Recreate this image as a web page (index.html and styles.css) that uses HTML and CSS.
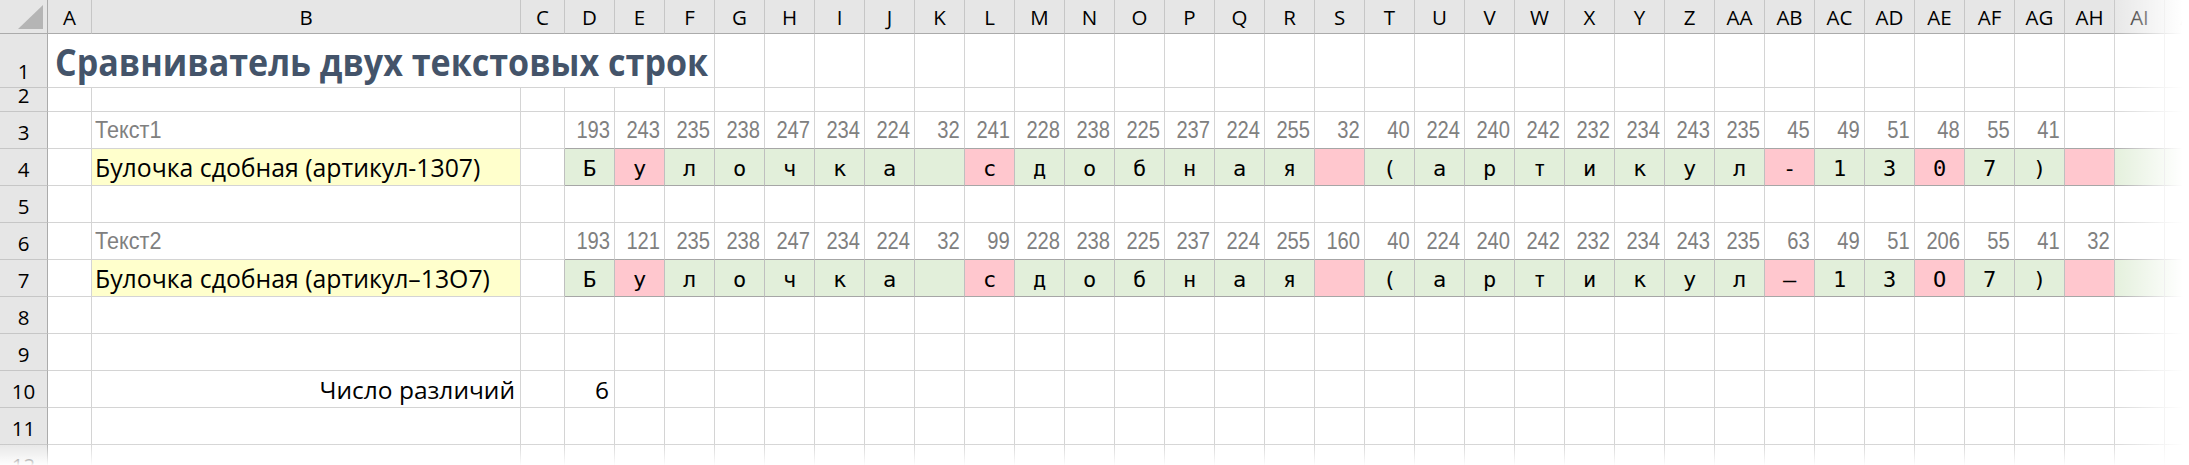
FILE: index.html
```html
<!DOCTYPE html>
<html lang="ru">
<head>
<meta charset="utf-8">
<title>Сравниватель двух текстовых строк</title>
<link rel="stylesheet" href="styles.css">
</head>
<body>
<div class="sheet">
<div class="corner"><svg width="25" height="24" viewBox="0 0 25 24"><polygon points="0,24 25,24 25,0" fill="#b5b5b5"/></svg></div>
<div class="hc">A</div><div class="hc">B</div><div class="hc">C</div><div class="hc">D</div><div class="hc">E</div><div class="hc">F</div>
<div class="hc">G</div><div class="hc">H</div><div class="hc">I</div><div class="hc">J</div><div class="hc">K</div><div class="hc">L</div>
<div class="hc">M</div><div class="hc">N</div><div class="hc">O</div><div class="hc">P</div><div class="hc">Q</div><div class="hc">R</div>
<div class="hc">S</div><div class="hc">T</div><div class="hc">U</div><div class="hc">V</div><div class="hc">W</div><div class="hc">X</div>
<div class="hc">Y</div><div class="hc">Z</div><div class="hc">AA</div><div class="hc">AB</div><div class="hc">AC</div><div class="hc">AD</div>
<div class="hc">AE</div><div class="hc">AF</div><div class="hc">AG</div><div class="hc">AH</div><div class="hc">AI</div><div class="hc">AJ</div>

<div class="hr">1</div><div class="title"><span>Сравниватель двух текстовых строк</span></div>
<i></i><i></i><i></i><i></i><i></i><i></i><i></i><i></i><i></i><i></i>
<i></i><i></i><i></i><i></i><i></i><i></i><i></i><i></i><i></i><i></i>
<i></i><i></i><i></i><i></i><i></i><i></i><i></i><i></i><i></i><i></i>

<div class="hr">2</div>
<i></i><i></i><i></i><i></i><i></i><i></i><i></i><i></i><i></i><i></i><i></i><i></i>
<i></i><i></i><i></i><i></i><i></i><i></i><i></i><i></i><i></i><i></i><i></i><i></i>
<i></i><i></i><i></i><i></i><i></i><i></i><i></i><i></i><i></i><i></i><i></i><i></i>

<div class="hr">3</div><i></i><div class="lbl"><span>Текст1</span></div><i></i>
<div class="n"><span>193</span></div><div class="n"><span>243</span></div><div class="n"><span>235</span></div><div class="n"><span>238</span></div><div class="n"><span>247</span></div><div class="n"><span>234</span></div>
<div class="n"><span>224</span></div><div class="n"><span>32</span></div><div class="n"><span>241</span></div><div class="n"><span>228</span></div><div class="n"><span>238</span></div><div class="n"><span>225</span></div>
<div class="n"><span>237</span></div><div class="n"><span>224</span></div><div class="n"><span>255</span></div><div class="n"><span>32</span></div><div class="n"><span>40</span></div><div class="n"><span>224</span></div>
<div class="n"><span>240</span></div><div class="n"><span>242</span></div><div class="n"><span>232</span></div><div class="n"><span>234</span></div><div class="n"><span>243</span></div><div class="n"><span>235</span></div>
<div class="n"><span>45</span></div><div class="n"><span>49</span></div><div class="n"><span>51</span></div><div class="n"><span>48</span></div><div class="n"><span>55</span></div><div class="n"><span>41</span></div>
<i class="nb"></i><i class="nb"></i><i class="nb"></i>

<div class="hr">4</div><i></i><div class="y">Булочка сдобная (артикул-1307)</div><i class="cb"></i>
<div class="g">Б</div><div class="r">у</div><div class="g">л</div><div class="g">о</div><div class="g">ч</div><div class="g">к</div>
<div class="g">а</div><div class="g"></div><div class="r">с</div><div class="g">д</div><div class="g">о</div><div class="g">б</div>
<div class="g">н</div><div class="g">а</div><div class="g">я</div><div class="r"></div><div class="g">(</div><div class="g">а</div>
<div class="g">р</div><div class="g">т</div><div class="g">и</div><div class="g">к</div><div class="g">у</div><div class="g">л</div>
<div class="r">-</div><div class="g">1</div><div class="g">3</div><div class="r">0</div><div class="g">7</div><div class="g">)</div>
<div class="r"></div><div class="g"></div><div class="g"></div>

<div class="hr">5</div>
<i></i><i></i><i></i><i></i><i></i><i></i><i></i><i></i><i></i><i></i><i></i><i></i>
<i></i><i></i><i></i><i></i><i></i><i></i><i></i><i></i><i></i><i></i><i></i><i></i>
<i></i><i></i><i></i><i></i><i></i><i></i><i></i><i></i><i></i><i></i><i></i><i></i>

<div class="hr">6</div><i></i><div class="lbl"><span>Текст2</span></div><i></i>
<div class="n"><span>193</span></div><div class="n"><span>121</span></div><div class="n"><span>235</span></div><div class="n"><span>238</span></div><div class="n"><span>247</span></div><div class="n"><span>234</span></div>
<div class="n"><span>224</span></div><div class="n"><span>32</span></div><div class="n"><span>99</span></div><div class="n"><span>228</span></div><div class="n"><span>238</span></div><div class="n"><span>225</span></div>
<div class="n"><span>237</span></div><div class="n"><span>224</span></div><div class="n"><span>255</span></div><div class="n"><span>160</span></div><div class="n"><span>40</span></div><div class="n"><span>224</span></div>
<div class="n"><span>240</span></div><div class="n"><span>242</span></div><div class="n"><span>232</span></div><div class="n"><span>234</span></div><div class="n"><span>243</span></div><div class="n"><span>235</span></div>
<div class="n"><span>63</span></div><div class="n"><span>49</span></div><div class="n"><span>51</span></div><div class="n"><span>206</span></div><div class="n"><span>55</span></div><div class="n"><span>41</span></div>
<div class="n"><span>32</span></div><i class="nb"></i><i class="nb"></i>

<div class="hr">7</div><i></i><div class="y">Бyлочка cдобная&nbsp;(артикул–13О7) </div><i class="cb"></i>
<div class="g">Б</div><div class="r">y</div><div class="g">л</div><div class="g">о</div><div class="g">ч</div><div class="g">к</div>
<div class="g">а</div><div class="g"></div><div class="r">c</div><div class="g">д</div><div class="g">о</div><div class="g">б</div>
<div class="g">н</div><div class="g">а</div><div class="g">я</div><div class="r"></div><div class="g">(</div><div class="g">а</div>
<div class="g">р</div><div class="g">т</div><div class="g">и</div><div class="g">к</div><div class="g">у</div><div class="g">л</div>
<div class="r">–</div><div class="g">1</div><div class="g">3</div><div class="r">О</div><div class="g">7</div><div class="g">)</div>
<div class="r"></div><div class="g"></div><div class="g"></div>

<div class="hr">8</div>
<i></i><i></i><i></i><i></i><i></i><i></i><i></i><i></i><i></i><i></i><i></i><i></i>
<i></i><i></i><i></i><i></i><i></i><i></i><i></i><i></i><i></i><i></i><i></i><i></i>
<i></i><i></i><i></i><i></i><i></i><i></i><i></i><i></i><i></i><i></i><i></i><i></i>

<div class="hr">9</div>
<i></i><i></i><i></i><i></i><i></i><i></i><i></i><i></i><i></i><i></i><i></i><i></i>
<i></i><i></i><i></i><i></i><i></i><i></i><i></i><i></i><i></i><i></i><i></i><i></i>
<i></i><i></i><i></i><i></i><i></i><i></i><i></i><i></i><i></i><i></i><i></i><i></i>

<div class="hr">10</div><i></i><div class="rt">Число различий</div><i></i><div class="rt">6</div>
<i></i><i></i><i></i><i></i><i></i><i></i><i></i><i></i>
<i></i><i></i><i></i><i></i><i></i><i></i><i></i><i></i>
<i></i><i></i><i></i><i></i><i></i><i></i><i></i><i></i>
<i></i><i></i><i></i><i></i><i></i><i></i><i></i><i></i>

<div class="hr">11</div>
<i></i><i></i><i></i><i></i><i></i><i></i><i></i><i></i><i></i><i></i><i></i><i></i>
<i></i><i></i><i></i><i></i><i></i><i></i><i></i><i></i><i></i><i></i><i></i><i></i>
<i></i><i></i><i></i><i></i><i></i><i></i><i></i><i></i><i></i><i></i><i></i><i></i>

<div class="hr">12</div>
<i></i><i></i><i></i><i></i><i></i><i></i><i></i><i></i><i></i><i></i><i></i><i></i>
<i></i><i></i><i></i><i></i><i></i><i></i><i></i><i></i><i></i><i></i><i></i><i></i>
<i></i><i></i><i></i><i></i><i></i><i></i><i></i><i></i><i></i><i></i><i></i><i></i>
</div>
<div class="fade-r"></div>
<div class="fade-b"></div>
</body>
</html>
```

FILE: styles.css
```css
* { box-sizing: border-box; }
html, body { margin: 0; padding: 0; background: #fff; }
body {
  width: 2189px;
  height: 465px;
  overflow: hidden;
  position: relative;
  font-family: "Open Sans", "Noto Sans", sans-serif;
  color: #000;
}
.sheet {
  display: grid;
  grid-template-columns: 48px 44px 429px 44px repeat(33, 50px);
  grid-template-rows: 34px 54px 24px repeat(10, 37px);
}
.sheet > * {
  display: flex;
  align-items: flex-end;
  min-width: 0;
  white-space: pre;
  line-height: 1;
  font-style: normal;
  border-right: 1px solid #d4d4d4;
  border-bottom: 1px solid #d4d4d4;
}
.corner {
  background: #e6e6e6;
  border-right-color: #ababab;
  border-bottom-color: #ababab;
  justify-content: flex-end;
  padding: 0 4px 4px 0;
}
.hc {
  background: #e6e6e6;
  border-right-color: #c6c6c6;
  border-bottom-color: #ababab;
  justify-content: center;
  font-size: 20.5px;
  padding-bottom: 6px;
}
.hr {
  background: #e6e6e6;
  border-right-color: #ababab;
  border-bottom-color: #c6c6c6;
  justify-content: center;
  font-size: 20.5px;
  padding-bottom: 6px;
}
.title {
  grid-column: span 6;
  font-weight: 700;
  font-size: 37px;
  color: #44546a;
  padding: 0 0 7px 7px;
}
.title span {
  display: inline-block;
  transform: scaleX(0.92);
  transform-origin: left bottom;
}
.lbl, .n {
  color: #808080;
  font-family: "Liberation Sans", Arial, sans-serif;
  font-size: 24px;
}
.lbl span, .n span {
  display: inline-block;
  transform: scaleX(0.84);
}
.lbl { padding: 0 0 6px 3px; }
.lbl span {
  transform: scaleX(0.9);
  transform-origin: left bottom;
}
.n {
  justify-content: flex-end;
  padding: 0 4px 6px 0;
  border-bottom-color: #a6a6a6;
}
.n span { transform-origin: right bottom; }
.nb { border-bottom-color: #a6a6a6; }
.cb { border-right-color: #bfbfbf; }
.y {
  background: #ffffcc;
  font-size: 24.8px;
  padding: 0 0 5px 3px;
}
.g, .r {
  justify-content: center;
  font-family: "DejaVu Sans Mono", "Liberation Mono", monospace;
  font-size: 22px;
  padding-bottom: 5px;
  border-right-color: #bfbfbf;
  border-bottom-color: #a6a6a6;
}
.g { background: #e2efda; }
.r { background: #ffc7ce; }
.rt {
  justify-content: flex-end;
  font-size: 24.5px;
  padding: 0 5px 5px 0;
}
.fade-r {
  position: absolute;
  top: 0;
  right: 0;
  width: 80px;
  height: 100%;
  background: linear-gradient(to right, rgba(255,255,255,0), #fff 92%);
  pointer-events: none;
}
.fade-b {
  position: absolute;
  left: 0;
  bottom: 0;
  width: 100%;
  height: 22px;
  background: linear-gradient(to bottom, rgba(255,255,255,0), rgba(255,255,255,0.95));
  pointer-events: none;
}
```
